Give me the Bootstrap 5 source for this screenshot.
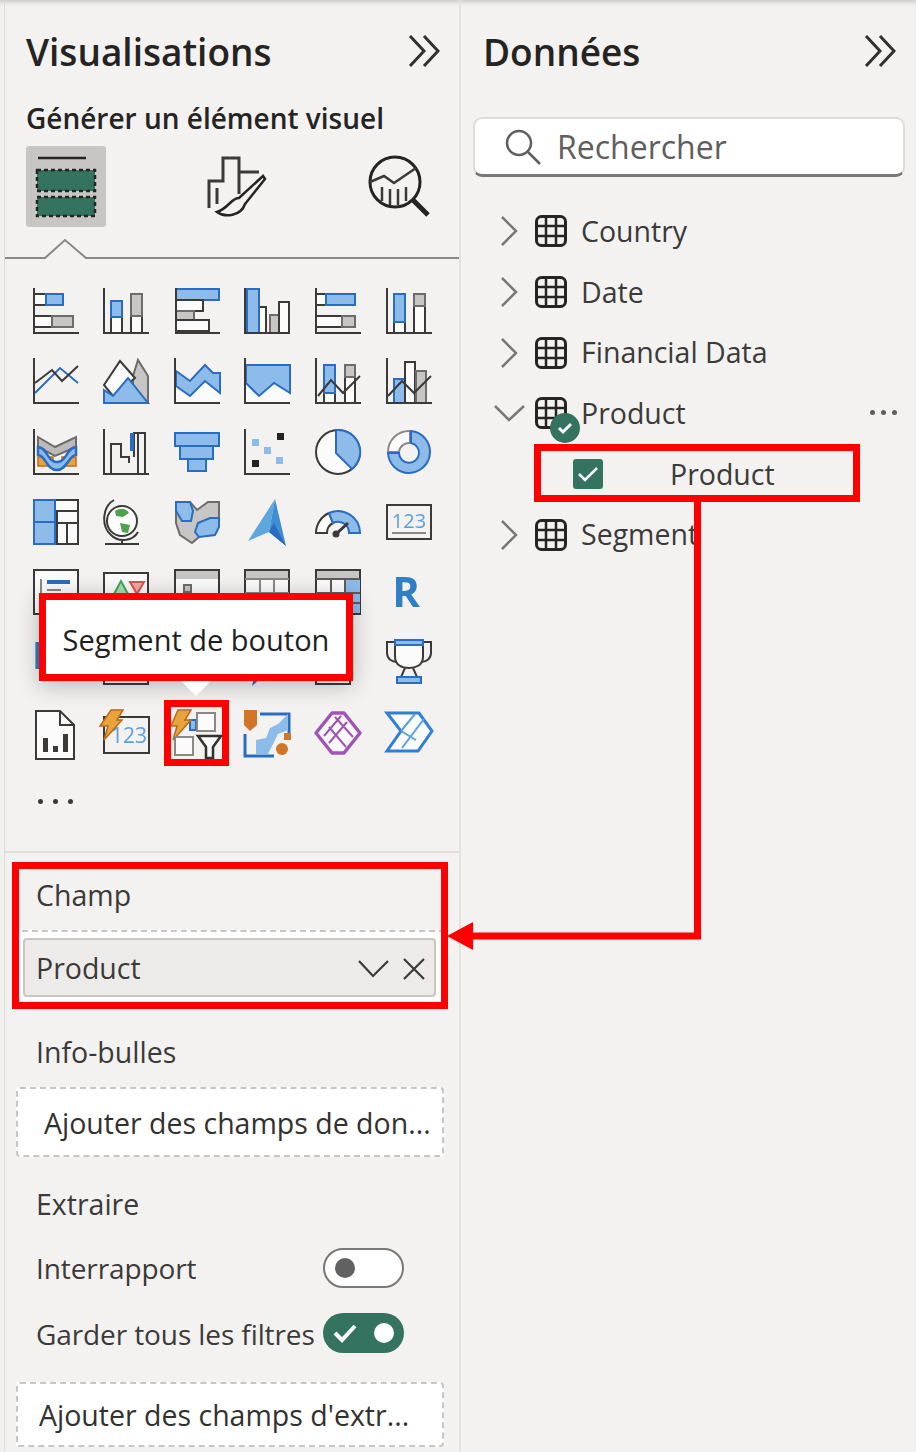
<!DOCTYPE html>
<html lang="fr">

<head>
    <meta charset="UTF-8">
    <meta name="viewport" content="width=device-width, initial-scale=1.0">
    <title>Volets Power BI</title>
    <link href="https://cdn.jsdelivr.net/npm/bootstrap@5.3.0/dist/css/bootstrap.min.css" rel="stylesheet">
    <style>
        html, body { height: 100%; }
        body { background: #f3f2f1; font-family: "Open Sans", "Noto Sans", sans-serif; color: #323130; overflow: hidden; }
        .stage { position: relative; width: 916px; height: 1452px; box-shadow: inset 0 5px 4px -3px #c8c6c4; }
        .viz-pane { width: 457px; height: 1452px; margin-left: 4px; border-left: 1px solid #dcdad8; border-right: 2px solid #e4e2e0; }
        .data-pane { width: 455px; height: 1452px; }
        .pane-head { height: 104px; padding-bottom: 2px !important; }
        .pane-title { font-size: 37px; font-weight: 600; color: #252423; line-height: 1; margin: 0; }
        .viz-pane .pane-head { padding: 0 19px 0 21px; }
        .data-pane .pane-head { padding: 0 20px 0 22px; }
        .build-label { font-size: 28px; font-weight: 600; line-height: 28px; height: 28px; padding-left: 21px; color: #252423; white-space: nowrap; }
        .tab-row { height: 81px; margin-top: 14px; padding: 0 29px 0 21px; }
        .tab-on { width: 80px; height: 81px; background: #c8c6c4; border-radius: 3px; }
        .tab-rule { display: block; height: 32px; width: 454px; }
        .icon-grid { display: grid; grid-template-columns: repeat(6, 46px); grid-auto-rows: 46px; column-gap: 24.67px; row-gap: 24.3px; margin: 29px 0 0 27.5px; }
        .vi { width: 46px; height: 46px; overflow: visible; display: block; filter: blur(.4px); }
        .k { fill: none; stroke: #3b3a39; stroke-width: 2; }
        .kw { fill: #fbfbfb; stroke: #3b3a39; stroke-width: 2; }
        .kg { fill: #c8c6c4; stroke: #6e6c6a; stroke-width: 2; }
        .b { fill: #8dbbea; stroke: #2a6dc0; stroke-width: 2; }
        .bl { fill: none; stroke: #2a6dc0; stroke-width: 2; }
        .o { fill: #e8a33d; stroke: #c8691c; stroke-width: 1.5; }
        .more-row { height: 50px; margin-top: 21px; margin-bottom: 24px; padding-left: 33px; gap: 10px; }
        .more-dot { width: 5px; height: 5px; background: #3b3a39; border-radius: 50%; }
        .well-divider { height: 2px; background: #e1dfdd; margin-top: 1px; }
        .field-label { font-size: 28.5px; line-height: 36px; height: 36px; padding-left: 31px; color: #3b3a39; white-space: nowrap; }
        .label-champ { margin-top: 24px; }
        .label-info { margin-top: 33px; }
        .label-extract { margin-top: 29px; }
        .field-well { height: 71px; margin: 17px 14px 0 7px; background: #fff; border-top: 2px dashed #c8c6c4; padding: 6px 9px 0 11px; }
        .field-pill { height: 59px; background: #edebe9; border: 2px solid #c8c6c4; border-radius: 4px; padding: 3px 9px 0 11px; font-size: 28.5px; color: #3b3a39; }
        .drop-zone { background: #fff; border: 2px dashed #c8c6c4; border-radius: 4px; font-size: 28.5px; white-space: nowrap; overflow: hidden; margin: 0 15px 0 11px; padding-top: 3px; }
        .zone-info { height: 70px; margin-top: 17px; padding-left: 26px; }
        .zone-extract { height: 65px; margin-top: 29px; padding-left: 21px; }
        .switch-row { height: 40px; padding: 0 55px 0 31px; font-size: 28px; letter-spacing: -.1px; color: #3b3a39; white-space: nowrap; }
        .row-first { margin-top: 26px; }
        .row-second { margin-top: 25px; }
        .row-second span:first-child { padding-top: 2px; }
        .pbi-switch { flex: none; width: 81px; height: 40px; border-radius: 20px; padding: 0 10px; }
        .switch-off { background: #fff; border: 2px solid #7a7876; }
        .switch-on { background: #33735f; }
        .knob { width: 20px; height: 20px; border-radius: 50%; background: #616161; }
        .switch-on .knob { background: #fff; margin-left: auto; padding: 0; }
        .search-box { height: 60px; margin: 13px 11px 0 12px; background: #fff; border: 2px solid #dedcda; border-bottom: 3px solid #7a7876; border-radius: 9px; padding-left: 30px; font-size: 32px; color: #605e5c; }
        .tree-list { margin-top: 24px; }
        .tree-row { height: 60.7px; padding-left: 39px; font-size: 28.5px; color: #3b3a39; white-space: nowrap; }
        .tree-chev { width: 18px; height: 34px; flex: none; margin-right: 17px; }
        .tree-table { width: 32px; height: 32px; flex: none; margin-right: 14px; }
        .tree-badge { position: absolute; left: 89px; top: 30px; width: 30px; height: 30px; }
        .tree-dots { position: absolute; left: 409px; top: 27px; gap: 6px; }
        .tree-dot { width: 5px; height: 5px; border-radius: 50%; background: #605e5c; }
        .child-check { width: 30px; height: 30px; background: #33735f; border-radius: 3px; margin-left: 73px; margin-right: 67px; }
        .red-box { position: absolute; border: 7px solid #ff0000; }
        .tip-box { left: 39px; top: 593px; width: 314px; height: 88px; padding-top: 6px; background: #fff; box-shadow: 0 4px 22px rgba(0, 0, 0, .25); font-size: 29px; color: #201f1e; z-index: 3; white-space: nowrap; }
        .tip-arrow { position: absolute; left: 181px; top: 681px; width: 30px; height: 15px; z-index: 3; }
        .connector { position: absolute; left: 0; top: 0; width: 916px; height: 1452px; z-index: 4; pointer-events: none; }
    </style>
</head>

<body>
    <svg class="d-none">
        <symbol id="tbl" viewBox="0 0 32 32"><rect x="1.5" y="1.5" width="29" height="29" rx="5" fill="none" stroke="#252423" stroke-width="3"/><path d="M11 1.5V30.5M21 1.5V30.5M1.5 11H30.5M1.5 21H30.5" stroke="#252423" stroke-width="2.5"/></symbol>
        <symbol id="chev2" viewBox="0 0 32 32"><path d="M2 1L16 16L2 31M16 1L30 16L16 31" fill="none" stroke="#323130" stroke-width="3"/></symbol>
        <symbol id="chev" viewBox="0 0 18 34"><path d="M2 3L16 17L2 31" fill="none" stroke="#7a7876" stroke-width="2.5"/></symbol>
    </svg>

    <div class="stage d-flex">
        <div class="viz-pane flex-shrink-0">
            <div class="pane-head d-flex align-items-center justify-content-between">
                <h1 class="pane-title">Visualisations</h1>
                <svg width="32" height="32"><use href="#chev2"/></svg>
            </div>
            <div class="build-label">Générer un élément visuel</div>
            <div class="tab-row d-flex align-items-center justify-content-between">
                <div class="tab-on d-flex align-items-center justify-content-center">
                    <svg width="64" height="64" viewBox="0 0 64 64"><path d="M4 3H52" stroke="#252423" stroke-width="2.5"/><rect x="3" y="15" width="58" height="21" fill="#33735f" stroke="#252423" stroke-width="2.5" stroke-dasharray="4 3"/><rect x="3" y="42" width="58" height="19" fill="#33735f" stroke="#252423" stroke-width="2.5" stroke-dasharray="4 3"/></svg>
                </div>
                <svg width="60" height="62" viewBox="0 0 60 62"><path d="M2 52V25H16V2H32V38M32 16H52" fill="none" stroke="#3b3a39" stroke-width="3"/><path d="M10 32V48" stroke="#3b3a39" stroke-width="3"/><path d="M56 20L32 42C24 42 22 52 10 56C18 62 34 60 38 48L58 23Z" fill="#f3f2f1" stroke="#252423" stroke-width="2.5"/></svg>
                <svg width="62" height="64" viewBox="0 0 62 64"><circle cx="27" cy="27" r="25" fill="none" stroke="#252423" stroke-width="3"/><path d="M2 27L16 21L26 28L48 13" fill="none" stroke="#3b3a39" stroke-width="2.5"/><path d="M14 32V46M22 34V50M30 34V50M38 32V46" stroke="#3b3a39" stroke-width="2.5"/><path d="M45 45L60 60" stroke="#252423" stroke-width="5"/></svg>
            </div>
            <svg class="tab-rule" viewBox="0 0 454 32"><path d="M0 31H40L60 13L81 31H454" fill="none" stroke="#8a8886" stroke-width="2"/></svg>

            <div class="icon-grid">
                <!-- ligne 1 -->
                <svg class="vi" viewBox="0 0 46 46"><rect class="kw" x="1" y="6" width="12" height="11"/><rect class="b" x="13" y="6" width="17" height="11"/><rect class="kw" x="1" y="28" width="18" height="11"/><rect class="kg" x="19" y="28" width="21" height="11"/><path class="k" d="M1 0V45H46"/></svg>
                <svg class="vi" viewBox="0 0 46 46"><rect class="kw" x="8" y="29" width="11" height="16"/><rect class="b" x="8" y="13" width="11" height="16"/><rect class="kw" x="28" y="28" width="11" height="17"/><rect class="kg" x="28" y="6" width="11" height="22"/><path class="k" d="M1 0V45H46"/></svg>
                <svg class="vi" viewBox="0 0 46 46"><rect class="b" x="2" y="1" width="43" height="11"/><rect class="kw" x="2" y="12" width="27" height="11"/><rect class="kg" x="2" y="23" width="18" height="9"/><rect class="kw" x="2" y="32" width="33" height="11"/><path class="k" d="M2 0V45H46"/></svg>
                <svg class="vi" viewBox="0 0 46 46"><rect class="kw" x="15" y="19" width="7" height="26"/><rect class="kg" x="26" y="27" width="9" height="18"/><rect class="kw" x="35" y="14" width="10" height="31"/><rect class="b" x="3" y="1" width="12" height="44"/><path class="k" d="M1 0V45H46"/></svg>
                <svg class="vi" viewBox="0 0 46 46"><rect class="kw" x="1" y="6" width="10" height="11"/><rect class="b" x="11" y="6" width="29" height="11"/><rect class="kw" x="1" y="28" width="26" height="11"/><rect class="kg" x="27" y="28" width="13" height="11"/><path class="k" d="M1 0V45H46"/></svg>
                <svg class="vi" viewBox="0 0 46 46"><rect class="kw" x="8" y="34" width="11" height="11"/><rect class="b" x="8" y="6" width="11" height="28"/><rect class="kw" x="28" y="18" width="11" height="27"/><rect class="kg" x="28" y="6" width="11" height="12"/><path class="k" d="M1 0V45H46"/></svg>
                <!-- ligne 2 -->
                <svg class="vi" viewBox="0 0 46 46"><path class="bl" d="M2 35L27 10L45 25"/><path class="k" d="M2 25L19 12L29 23L45 8"/><path class="k" d="M1 0V45H46"/></svg>
                <svg class="vi" viewBox="0 0 46 46"><path class="kg" d="M30 18L35 2L45 18V45H30Z"/><path class="kw" d="M1 27L17 3L32 20L10 38Z"/><path class="b" d="M1 32L10 38L25 20L45 45H1Z"/></svg>
                <svg class="vi" viewBox="0 0 46 46"><path fill="#fbfbfb" d="M2 28L16 38L31 23L46 35V45H2Z"/><path class="b" d="M2 13L16 23L31 7L39 15H46V35L31 23L16 38L2 28Z"/><path class="k" d="M1 0V45H46"/></svg>
                <svg class="vi" viewBox="0 0 46 46"><path fill="#fbfbfb" d="M2 25L15 38L30 25L46 35V45H2Z"/><path class="b" d="M2 7H46V35L30 25L15 38L2 25Z"/><path class="k" d="M1 0V45H46"/></svg>
                <svg class="vi" viewBox="0 0 46 46"><rect class="kw" x="9" y="35" width="11" height="10"/><rect class="b" x="9" y="7" width="11" height="28"/><rect class="kw" x="30" y="19" width="10" height="26"/><rect class="kg" x="30" y="7" width="10" height="12"/><path class="k" d="M3 38L16 22L28 35L45 18"/><path class="k" d="M1 0V45H46"/></svg>
                <svg class="vi" viewBox="0 0 46 46"><rect class="b" x="8" y="21" width="11" height="24"/><rect class="kw" x="19" y="4" width="10" height="41"/><rect class="kg" x="30" y="13" width="10" height="32"/><path class="k" d="M2 38L16 23L28 35L45 18"/><path class="k" d="M1 0V45H46"/></svg>
                <!-- ligne 3 -->
                <svg class="vi" viewBox="0 0 46 46"><path class="o" d="M5 28H20V36H29V28H43V37H5Z"/><path d="M5 8L22 18L43 8V18L22 27L5 18Z" fill="#bdbbb9" stroke="#6e6c6a" stroke-width="2"/><path d="M5 18C14 18 14 33 24 33C34 33 34 18 43 18V26C36 26 34 41 24 41C13 41 13 26 5 26Z" fill="#8dbbea" stroke="#2a6dc0" stroke-width="2.5"/><path class="k" d="M1 0V45H46"/></svg>
                <svg class="vi" viewBox="0 0 46 46"><path class="k" d="M8 45V15H18V28H26V34M31 28V4H42V45M35 4V45"/><path d="M29 4V22" stroke="#2a6dc0" stroke-width="4"/><path class="k" d="M1 0V45H46"/></svg>
                <svg class="vi" viewBox="0 0 46 46"><rect class="b" x="1" y="4" width="44" height="13"/><rect class="b" x="6" y="17" width="33" height="13"/><rect class="b" x="14" y="30" width="18" height="12"/></svg>
                <svg class="vi" viewBox="0 0 46 46"><g fill="#252423"><rect x="33" y="4" width="7" height="7"/><rect x="8" y="31" width="7" height="7"/></g><g fill="#8dbbea"><rect x="8" y="10" width="7" height="7"/><rect x="20" y="18" width="7" height="7"/><rect x="32" y="28" width="7" height="7"/></g><path class="k" d="M1 0V45H46"/></svg>
                <svg class="vi" viewBox="0 0 46 46"><circle class="kw" cx="23" cy="23" r="22"/><path class="b" d="M21 1A22 22 0 0 1 37 40L21 24Z"/></svg>
                <svg class="vi" viewBox="0 0 46 46"><path d="M2 23A21 21 0 0 1 24 2V14A10 10 0 0 0 13 23Z" fill="#fbfbfb" stroke="#8a8886" stroke-width="2"/><path class="b" d="M25 2A21 21 0 1 1 2 24H13A10 10 0 1 0 25 14Z"/></svg>
                <!-- ligne 4 -->
                <svg class="vi" viewBox="0 0 46 46"><rect class="kw" x="1" y="1" width="44" height="44"/><path class="k" d="M22 12H45M24 12V45M24 24H45M34 24V45"/><rect class="b" x="1" y="1" width="21" height="22"/><rect class="b" x="1" y="23" width="21" height="22"/></svg>
                <svg class="vi" viewBox="0 0 46 46"><circle cx="19" cy="22" r="15" fill="#fff" stroke="#3b3a39" stroke-width="2"/><path d="M12 12C18 8 24 10 26 14L20 18L13 17ZM17 24L27 26L25 34L19 33Z" fill="#4ea24e"/><path class="k" d="M11 1C-1 8 -2 27 8 36C16 44 30 42 35 33M19 40V45M2 45H36"/></svg>
                <svg class="vi" viewBox="0 0 46 46"><path class="kg" d="M2 3H16L23 11L34 3H45V20L38 34L25 38L18 44L6 36L2 24Z"/><path class="b" d="M2 3H16L19 12L17 22H8L2 12Z"/><path class="b" d="M24 24L36 19H45V28L41 36L25 38L21 33Z"/></svg>
                <svg class="vi" viewBox="0 0 46 46"><path d="M31 0L4 42L25 33Z" fill="#5ea7dc"/><path d="M31 0L25 33L42 47Z" fill="#3d8ed4"/><path d="M30 24L25 33L42 47Z" fill="#2a6dc0"/></svg>
                <svg class="vi" viewBox="0 0 46 46"><path class="kw" d="M1 34A22 22 0 0 1 14 14L18 24A11 11 0 0 0 12 34Z"/><path class="b" d="M14 14A22 22 0 0 1 45 34H34A11 11 0 0 0 18 24Z"/><path d="M20 36L33 24" stroke="#3b3a39" stroke-width="3"/><circle cx="21" cy="35" r="3.5" fill="#3b3a39"/></svg>
                <svg class="vi" viewBox="0 0 46 46"><rect class="k" x="1" y="6" width="44" height="34"/><text x="23" y="29" text-anchor="middle" font-size="20" fill="#5aa0e0" font-family="Open Sans, sans-serif">123</text><path d="M6 34H40" stroke="#8a8886" stroke-width="2"/></svg>
                <!-- ligne 5 -->
                <svg class="vi" viewBox="0 0 46 46"><rect class="kw" x="1" y="1" width="44" height="44"/><path d="M14 13H37" stroke="#2a6dc0" stroke-width="4"/><path d="M8 10V36M14 21H28" stroke="#8a8886" stroke-width="2"/></svg>
                <svg class="vi" viewBox="0 0 46 46"><rect class="kw" x="1" y="4" width="44" height="41"/><path d="M11 25L18 12L25 25Z" fill="#a8dcae" stroke="#3fa659" stroke-width="2"/><path d="M27 13H41L34 25Z" fill="#f5a5a5" stroke="#d9534f" stroke-width="2"/></svg>
                <svg class="vi" viewBox="0 0 46 46"><rect class="kw" x="1" y="1" width="44" height="44"/><rect x="2" y="2" width="42" height="8" fill="#c8c6c4"/><rect class="kg" x="10" y="16" width="7" height="7"/></svg>
                <svg class="vi" viewBox="0 0 46 46"><rect class="kw" x="1" y="1" width="44" height="44"/><rect x="2" y="2" width="42" height="8" fill="#c8c6c4"/><path d="M1 10H45M16 10V45M30 10V45M1 24H45" stroke="#8a8886" stroke-width="2"/></svg>
                <svg class="vi" viewBox="0 0 46 46"><rect class="kw" x="1" y="1" width="44" height="44"/><rect x="30" y="10" width="15" height="34" fill="#8dbbea"/><rect x="2" y="2" width="42" height="8" fill="#c8c6c4"/><path d="M1 10H45M16 10V45M30 10V45M1 24H45M1 34H45" stroke="#5e5c5a" stroke-width="2"/></svg>
                <svg class="vi" viewBox="0 0 46 46"><text x="20" y="38" text-anchor="middle" font-size="42" font-weight="700" fill="#2f7fc6" font-family="Open Sans, sans-serif">R</text></svg>
                <!-- ligne 6 -->
                <svg class="vi" viewBox="0 0 46 46"><text x="-1" y="30" font-size="38" font-weight="700" fill="#2f7fc6" font-family="Open Sans, sans-serif">P</text></svg>
                <svg class="vi" viewBox="0 0 46 46"><rect class="kw" x="1" y="4" width="44" height="41"/></svg>
                <svg class="vi" viewBox="0 0 46 46"><path d="M36 39C34 44 30 44 27 44" stroke="#2a6dc0" stroke-width="4" fill="none"/></svg>
                <svg class="vi" viewBox="0 0 46 46"><path d="M8 47L16 40L10 38Z" fill="#2a6dc0"/></svg>
                <svg class="vi" viewBox="0 0 46 46"><rect class="kw" x="1" y="4" width="34" height="41"/></svg>
                <svg class="vi" viewBox="0 0 46 46"><path class="k" d="M9 3H1V14C1 20 6 23 11 23M37 3H45V14C45 20 40 23 35 23"/><path class="kw" d="M9 1H37V18C37 26 30 29 23 29C16 29 9 26 9 18Z"/><path d="M9 1H37V6H9Z" fill="#8dbbea" stroke="#2a6dc0" stroke-width="2"/><path class="k" d="M19 29L15 38H31L27 29"/><rect class="b" x="11" y="38" width="24" height="6"/></svg>
                <!-- ligne 7 -->
                <svg class="vi" viewBox="0 0 46 50" style="height:50px"><path class="kw" d="M3 1H27L41 15V49H3Z"/><path class="k" d="M27 1V15H41"/><path d="M10 28H15V42H10ZM20 36H25V42H20ZM30 24H35V42H30Z" fill="#3b3a39"/></svg>
                <svg class="vi" viewBox="0 0 46 46"><rect class="k" x="1" y="7" width="45" height="36"/><text x="26" y="33" text-anchor="middle" font-size="21" fill="#5aa0e0" font-family="Open Sans, sans-serif">123</text><path d="M8 0H20L14 10H19L1 30L5 16H-3Z" fill="#e8a33d" stroke="#b96a1c" stroke-width="1.5"/></svg>
                <svg class="vi" viewBox="0 0 46 46"><rect class="b" x="16" y="10" width="6" height="10"/><path d="M4 0H17L11 10H17L-1 30L3 16H-3Z" fill="#e8a33d" stroke="#b96a1c" stroke-width="1.5"/><rect x="23" y="3" width="18" height="18" fill="#fbfbfb" stroke="#8a8886" stroke-width="2"/><rect x="1" y="27" width="18" height="18" fill="#fbfbfb" stroke="#8a8886" stroke-width="2"/><path d="M24 26H47L39 37V48H32V37Z" fill="#fbfbfb" stroke="#323130" stroke-width="2.5"/></svg>
                <svg class="vi" viewBox="0 0 46 46"><path d="M16 4H45V24M1 24V46H30" fill="none" stroke="#2a6dc0" stroke-width="3"/><path d="M12 44V30L22 28L26 18L34 14L44 4V20L34 24L28 36L24 44Z" fill="#8dbbea"/><path d="M0 0H13V15L6 21L0 15Z" fill="#d07628"/><circle cx="38" cy="39" r="6" fill="#d07628"/><rect x="40" y="23" width="7" height="7" fill="#d07628"/></svg>
                <svg class="vi" viewBox="0 0 46 46"><path d="M17 3H29L45 23L29 43H17L1 23Z" fill="#f8f8f8" stroke="#a055b5" stroke-width="3.5" stroke-linejoin="round"/><path d="M20 7L38 27M32 12L14 33M14 17L31 37M26 6L9 26" fill="none" stroke="#a055b5" stroke-width="2"/></svg>
                <svg class="vi" viewBox="0 0 46 46"><path d="M1 3H33L46 21L32 41H1L15 21Z" fill="#fbfbfb" stroke="#2f7fd6" stroke-width="3"/><path d="M15 21L29 4M25 26L38 9M15 21L30 30M16 38L25 26" fill="none" stroke="#5aa0e0" stroke-width="2"/></svg>
            </div>

            <div class="more-row d-flex align-items-center"><span class="more-dot"></span><span class="more-dot"></span><span class="more-dot"></span></div>
            <div class="well-divider"></div>

            <div class="field-label label-champ">Champ</div>
            <div class="field-well">
                <div class="field-pill d-flex align-items-center justify-content-between">
                    <span>Product</span>
                    <svg width="67" height="28" viewBox="0 0 67 28"><path d="M1 6L15 21L30 6M46 4L66 24M66 4L46 24" fill="none" stroke="#3b3a39" stroke-width="2.2"/></svg>
                </div>
            </div>

            <div class="field-label label-info">Info-bulles</div>
            <div class="drop-zone zone-info d-flex align-items-center">Ajouter des champs de don...</div>

            <div class="field-label label-extract">Extraire</div>
            <div class="switch-row row-first d-flex align-items-center justify-content-between">
                <span>Interrapport</span>
                <div class="pbi-switch switch-off d-flex align-items-center"><span class="knob"></span></div>
            </div>
            <div class="switch-row row-second d-flex align-items-center justify-content-between">
                <span>Garder tous les filtres</span>
                <div class="pbi-switch switch-on d-flex align-items-center">
                    <svg width="24" height="20" viewBox="0 0 24 20"><path d="M2 10L9 17L22 3" fill="none" stroke="#fff" stroke-width="4"/></svg>
                    <span class="knob"></span>
                </div>
            </div>
            <div class="drop-zone zone-extract d-flex align-items-center">Ajouter des champs d'extr...</div>
        </div>

        <div class="data-pane">
            <div class="pane-head d-flex align-items-center justify-content-between">
                <h2 class="pane-title">Données</h2>
                <svg width="32" height="32"><use href="#chev2"/></svg>
            </div>
            <div class="search-box d-flex align-items-center gap-3">
                <svg width="36" height="36" viewBox="0 0 36 36"><circle cx="14" cy="14" r="12" fill="none" stroke="#605e5c" stroke-width="2.5"/><path d="M23 23L35 35" stroke="#605e5c" stroke-width="2.5"/></svg>
                <span>Rechercher</span>
            </div>
            <div class="tree-list">
                <div class="tree-row d-flex align-items-center">
                    <svg class="tree-chev"><use href="#chev"/></svg>
                    <svg class="tree-table"><use href="#tbl"/></svg>Country
                </div>
                <div class="tree-row d-flex align-items-center">
                    <svg class="tree-chev"><use href="#chev"/></svg>
                    <svg class="tree-table"><use href="#tbl"/></svg>Date
                </div>
                <div class="tree-row d-flex align-items-center">
                    <svg class="tree-chev"><use href="#chev"/></svg>
                    <svg class="tree-table"><use href="#tbl"/></svg>Financial Data
                </div>
                <div class="tree-row d-flex align-items-center position-relative">
                    <svg class="tree-chev" viewBox="0 0 18 34" style="overflow:visible"><path d="M-5 10L9 24L24 10" fill="none" stroke="#7a7876" stroke-width="2.5"/></svg>
                    <svg class="tree-table"><use href="#tbl"/></svg>Product
                    <svg class="tree-badge" viewBox="0 0 30 30"><circle cx="15" cy="15" r="15" fill="#33735f"/><path d="M9 15L13 19L21 11" fill="none" stroke="#fff" stroke-width="3"/></svg>
                    <div class="tree-dots d-flex"><span class="tree-dot"></span><span class="tree-dot"></span><span class="tree-dot"></span></div>
                </div>
                <div class="tree-row d-flex align-items-center">
                    <div class="child-check d-flex align-items-center justify-content-center">
                        <svg width="24" height="20" viewBox="0 0 24 20"><path d="M3 10L9 16L21 4" fill="none" stroke="#fff" stroke-width="2.5"/></svg>
                    </div>Product
                </div>
                <div class="tree-row d-flex align-items-center">
                    <svg class="tree-chev"><use href="#chev"/></svg>
                    <svg class="tree-table"><use href="#tbl"/></svg>Segment
                </div>
            </div>
        </div>

        <!-- annotations posees sur la capture -->
        <div class="red-box tip-box d-flex align-items-center justify-content-center">Segment de bouton</div>
        <svg class="tip-arrow" viewBox="0 0 30 15"><path d="M0 0H30L15 15Z" fill="#fff"/></svg>
        <svg class="connector" viewBox="0 0 916 1452">
            <g fill="none" stroke="#ff0000" stroke-width="7">
                <rect x="167.5" y="703.5" width="58" height="59"/>
                <rect x="15.5" y="865.5" width="429" height="140"/>
                <rect x="537.5" y="447.5" width="319" height="51"/>
                <path d="M697.5 502V936H470"/>
            </g>
            <path d="M447 936L473 922V950Z" fill="#ff0000"/>
        </svg>
    </div>
</body>

</html>
